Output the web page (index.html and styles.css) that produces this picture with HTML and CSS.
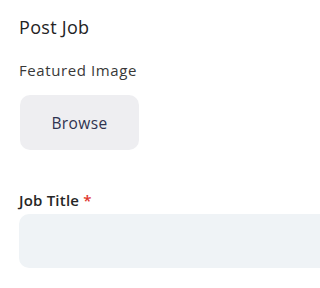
FILE: index.html
```html
<!DOCTYPE html>
<html>
<head>
<meta charset="utf-8">
<link rel="stylesheet" href="styles.css">
</head>
<body>
<div class="page">
  <h1 class="title">Post Job</h1>
  <div class="field">
    <div class="label">Featured Image</div>
    <button class="browse">Browse</button>
  </div>
  <div class="field field-job">
    <div class="label label-strong">Job Title <span class="req">*</span></div>
    <div class="input"></div>
  </div>
</div>
</body>
</html>
```
FILE: styles.css
```css
html, body {
  margin: 0;
  padding: 0;
  background: #ffffff;
  overflow: hidden;
}
.page {
  overflow: hidden;
  font-family: "Open Sans", "Noto Sans", sans-serif;
  padding: 15px 0 0 19px;
  color: #2b2b2b;
}
.title {
  margin: 0;
  font-size: 18px;
  font-weight: 500;
  line-height: 24px;
  letter-spacing: 0.3px;
  color: #232323;
}
.field {
  display: flex;
  flex-direction: column;
  align-items: flex-start;
}
.label {
  margin-top: 21px;
  font-size: 15px;
  line-height: 20px;
  color: #383838;
  letter-spacing: 0.6px;
}
.browse {
  margin-top: 15px;
  margin-left: 1px;
  width: 119px;
  height: 55px;
  border: none;
  border-radius: 10px;
  background: #eeeef1;
  font-family: inherit;
  font-size: 15.5px;
  letter-spacing: 0.4px;
  color: #2e3350;
  padding: 0;
}
.field-job {
  margin-top: 19px;
}
.label-strong {
  font-weight: 600;
  font-size: 15px;
  letter-spacing: 0.2px;
  color: #262626;
}
.req {
  color: #e0342c;
}
.input {
  margin-top: 4px;
  width: 800px;
  height: 54px;
  border-radius: 10px;
  background: #eff3f6;
}
```
